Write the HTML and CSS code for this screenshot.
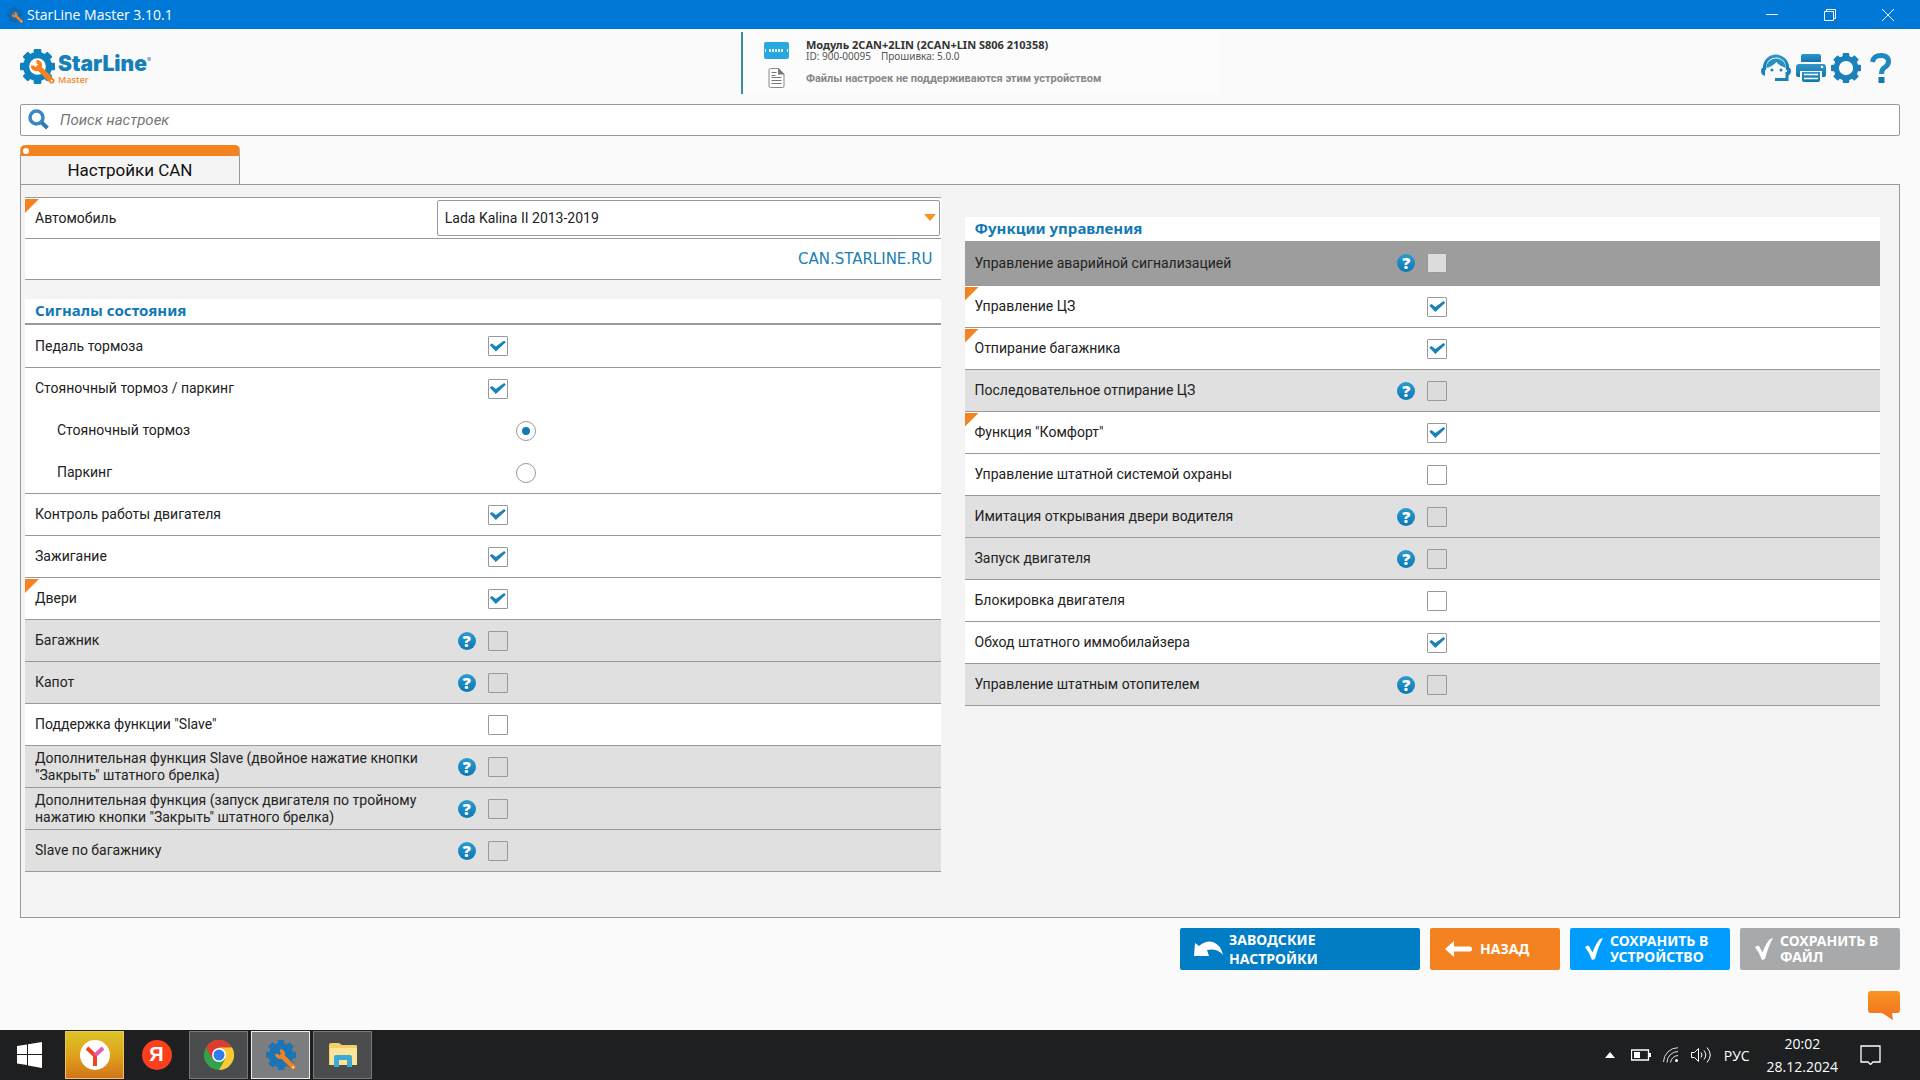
FILE: index.html
```html
<!DOCTYPE html>
<html lang="ru">
<head>
<meta charset="utf-8">
<title>StarLine Master 3.10.1</title>
<link rel="stylesheet" href="styles.css">
</head>
<body>
<svg class="defs" aria-hidden="true">
  <defs>
    <linearGradient id="blue" x1="0" y1="0" x2="0" y2="1"><stop offset="0" stop-color="#2f96c8"/><stop offset="1" stop-color="#0f76ad"/></linearGradient>
    <linearGradient id="amber" x1="0" y1="0" x2="0" y2="1"><stop offset="0" stop-color="#f79420"/><stop offset="1" stop-color="#f36f21"/></linearGradient>
  </defs>
  <symbol id="gear" viewBox="0 0 32 32">
    <circle cx="16" cy="16" r="10.400" fill="none" stroke="currentColor" stroke-width="5.600"/>
    <g fill="currentColor">
      <rect x="12.500" y="0" width="7" height="6" rx="1"/><rect x="12.500" y="26" width="7" height="6" rx="1"/>
      <rect x="0" y="12.500" width="6" height="7" rx="1"/><rect x="26" y="12.500" width="6" height="7" rx="1"/>
      <g transform="rotate(45 16 16)"><rect x="12.500" y="0" width="7" height="6" rx="1"/><rect x="12.500" y="26" width="7" height="6" rx="1"/><rect x="0" y="12.500" width="6" height="7" rx="1"/><rect x="26" y="12.500" width="6" height="7" rx="1"/></g>
    </g>
  </symbol>
  <symbol id="wrench" viewBox="0 0 32 32">
    <path d="M17 17L29 29" stroke="#f58220" stroke-width="5" stroke-linecap="round"/>
    <path d="M15 11.500A3.500 3.500 0 1 1 11.500 15" fill="none" stroke="#f58220" stroke-width="3.500"/>
    <circle cx="29" cy="29" r="1" fill="#fff"/>
  </symbol>
  <symbol id="tick" viewBox="0 0 18 22"><path d="M0 9Q3 7 4 8Q5.500 11 7.500 14.500Q11 5 15 1L18 0Q13 9 10 21L7 22Q4 14 0 9Z" fill="currentColor"/></symbol>
</svg>

<header class="titlebar">
  <svg class="app-icon"><use href="#gear" color="#1667a8"/><use href="#wrench"/></svg>
  <span class="app-title">StarLine Master 3.10.1</span>
  <button class="win-btn" aria-label="Свернуть"><svg width="12" height="12"><path d="M0 5.500H12" stroke="#fff"/></svg></button>
  <button class="win-btn" aria-label="Развернуть"><svg width="12" height="12" fill="none" stroke="#fff"><path d="M.5 2.500h9v9h-9zM2.500 2V.5h9v9H10"/></svg></button>
  <button class="win-btn" aria-label="Закрыть"><svg width="12" height="12" stroke="#fff"><path d="M0 0L12 12M12 0L0 12"/></svg></button>
</header>

<main class="app">
  <div class="toolbar">
    <div class="logo">
      <svg width="35" height="35"><circle cx="17" cy="17" r="10" fill="#fff"/><use href="#gear" color="#0f82bd"/><use href="#wrench"/></svg>
      <div class="logo-text"><span class="logo-name">StarLine</span><span class="logo-sub">Master</span></div>
    </div>
    <section class="device">
      <svg width="25" height="17" viewBox="0 0 25 17"><rect width="25" height="17" rx="2" fill="#29a8df"/><path d="M1.500 7v3M23.500 7v3" stroke="#fff"/><path d="M5 8.500h15" stroke="#fff" stroke-width="3" stroke-dasharray="2 1" opacity=".8"/></svg>
      <div><h1 class="device-name">Модуль 2CAN+2LIN (2CAN+LIN S806 210358)</h1><p class="device-info"><span>ID: 900-00095</span><span>Прошивка: 5.0.0</span></p></div>
      <svg width="16" height="20" viewBox="0 0 16 20"><path d="M2 .5H10L15.500 6V18Q15.500 19.500 14 19.500H2Q.5 19.500 .5 18V2Q.5 .5 2 .5Z" fill="#fff" stroke="#888"/><path d="M9.500 0V6.500H16Z" fill="#777"/><path d="M3 4.500h5M3 7.500h4M3 9.500h10M3 12.500h10M3 15.500h10" stroke="#777"/></svg>
      <p class="device-files">Файлы настроек не поддерживаются этим устройством</p>
    </section>
    <nav class="tools">
      <button class="tool" aria-label="Поддержка"><svg width="30" height="30" viewBox="0 0 30 30"><path d="M3.500 17V14A11.500 11 0 0 1 26.500 14V17" fill="none" stroke="url(#blue)" stroke-width="3"/><path d="M26 19V26.500H14" fill="none" stroke="#1a82b8" stroke-width="3"/><path d="M0 18Q0 14 4 14V23Q0 22 0 18ZM30 18Q30 14 26 14V23Q30 22 30 18Z" fill="#1a82b8"/><path d="M5 15Q6 6 15 5.500Q24 6 25 15Q19 14 15.500 9Q11 14 5 15Z" fill="#2a90c4"/><circle cx="11" cy="17" r="1.500" fill="#1a82b8"/><circle cx="20" cy="17" r="1.500" fill="#1a82b8"/></svg></button>
      <button class="tool" aria-label="Печать"><svg width="30" height="30" viewBox="0 0 30 30" fill="url(#blue)"><path d="M7 1H23Q25 1 25 3V9H5V3Q5 1 7 1Z"/><path d="M3 11H27Q30 11 30 14V22Q30 24 27 24H26V18H4V24H3Q0 24 0 22V14Q0 11 3 11Z"/><path d="M6 19H24V27Q24 29 22 29H8Q6 29 6 27Z"/><path d="M8 21.500H22M8 25.500H22" stroke="#fff" stroke-width="1.500"/><circle cx="26" cy="14" r="1.200" fill="#fff"/></svg></button>
      <button class="tool" aria-label="Настройки"><svg width="30" height="30"><use href="#gear" color="#1a82b8"/></svg></button>
      <button class="tool" aria-label="Справка"><svg width="30" height="30" viewBox="0 0 30 30"><path d="M6.500 9Q7.500 2.500 15 2.500Q22.500 2.500 22.500 8.500Q22.500 12 18.500 14.500Q15.500 16.500 15.500 21" fill="none" stroke="#1f88bf" stroke-width="5"/><rect x="12.500" y="24" width="6" height="6" fill="#1579b0"/></svg></button>
    </nav>
  </div>

  <label class="search">
    <svg width="22" height="22" viewBox="0 0 22 22"><circle cx="8.500" cy="8.500" r="6.500" fill="none" stroke="#3a87c8" stroke-width="3.500"/><path d="M13.500 13.500L19.500 19" stroke="#2f78b8" stroke-width="4"/></svg>
    <input class="search-input" type="text" placeholder="Поиск настроек" aria-label="Поиск настроек">
  </label>

  <div class="tabs"><button class="tab">Настройки CAN</button></div>

  <div class="panel">
    <div class="column">
      <div class="vehicle">
        <label class="label changed" for="car">Автомобиль</label>
        <div class="select-box">
          <select class="select" id="car"><option>Lada Kalina II 2013-2019</option></select>
          <svg class="caret" width="12" height="8"><path d="M0 0H12L6 7Z" fill="#f7941e"/></svg>
        </div>
      </div>
      <div class="link-row"><a class="link" href="#">CAN.STARLINE.RU</a></div>

      <h2 class="heading ruled">Сигналы состояния</h2>
      <div class="row first"><label class="label" for="s1">Педаль тормоза</label><div class="control"><input class="check" type="checkbox" id="s1" checked></div></div>
      <div class="row open"><label class="label" for="s2">Стояночный тормоз / паркинг</label><div class="control"><input class="check" type="checkbox" id="s2" checked></div></div>
      <div class="row open"><label class="label sub" for="r1">Стояночный тормоз</label><div class="control"><input class="radio" type="radio" name="brake" id="r1" checked></div></div>
      <div class="row"><label class="label sub" for="r2">Паркинг</label><div class="control"><input class="radio" type="radio" name="brake" id="r2"></div></div>
      <div class="row"><label class="label" for="s3">Контроль работы двигателя</label><div class="control"><input class="check" type="checkbox" id="s3" checked></div></div>
      <div class="row"><label class="label" for="s4">Зажигание</label><div class="control"><input class="check" type="checkbox" id="s4" checked></div></div>
      <div class="row"><label class="label changed" for="s5">Двери</label><div class="control"><input class="check" type="checkbox" id="s5" checked></div></div>
      <div class="row off"><label class="label" for="s6">Багажник</label><div class="control"><button class="help">?</button><input class="check" type="checkbox" id="s6" disabled></div></div>
      <div class="row off"><label class="label" for="s7">Капот</label><div class="control"><button class="help">?</button><input class="check" type="checkbox" id="s7" disabled></div></div>
      <div class="row"><label class="label" for="s8">Поддержка функции "Slave"</label><div class="control"><input class="check" type="checkbox" id="s8"></div></div>
      <div class="row off"><label class="label" for="s9">Дополнительная функция Slave (двойное нажатие кнопки "Закрыть" штатного брелка)</label><div class="control"><button class="help">?</button><input class="check" type="checkbox" id="s9" disabled></div></div>
      <div class="row off"><label class="label" for="s10">Дополнительная функция (запуск двигателя по тройному нажатию кнопки "Закрыть" штатного брелка)</label><div class="control"><button class="help">?</button><input class="check" type="checkbox" id="s10" disabled></div></div>
      <div class="row off"><label class="label" for="s11">Slave по багажнику</label><div class="control"><button class="help">?</button><input class="check" type="checkbox" id="s11" disabled></div></div>
    </div>

    <div class="column second">
      <h2 class="heading">Функции управления</h2>
      <div class="row off current"><label class="label" for="c1">Управление аварийной сигнализацией</label><div class="control"><button class="help">?</button><input class="check" type="checkbox" id="c1" disabled></div></div>
      <div class="row"><label class="label changed" for="c2">Управление ЦЗ</label><div class="control"><input class="check" type="checkbox" id="c2" checked></div></div>
      <div class="row"><label class="label changed" for="c3">Отпирание багажника</label><div class="control"><input class="check" type="checkbox" id="c3" checked></div></div>
      <div class="row off"><label class="label" for="c4">Последовательное отпирание ЦЗ</label><div class="control"><button class="help">?</button><input class="check" type="checkbox" id="c4" disabled></div></div>
      <div class="row"><label class="label changed" for="c5">Функция "Комфорт"</label><div class="control"><input class="check" type="checkbox" id="c5" checked></div></div>
      <div class="row"><label class="label" for="c6">Управление штатной системой охраны</label><div class="control"><input class="check" type="checkbox" id="c6"></div></div>
      <div class="row off"><label class="label" for="c7">Имитация открывания двери водителя</label><div class="control"><button class="help">?</button><input class="check" type="checkbox" id="c7" disabled></div></div>
      <div class="row off"><label class="label" for="c8">Запуск двигателя</label><div class="control"><button class="help">?</button><input class="check" type="checkbox" id="c8" disabled></div></div>
      <div class="row"><label class="label" for="c9">Блокировка двигателя</label><div class="control"><input class="check" type="checkbox" id="c9"></div></div>
      <div class="row"><label class="label" for="c10">Обход штатного иммобилайзера</label><div class="control"><input class="check" type="checkbox" id="c10" checked></div></div>
      <div class="row off"><label class="label" for="c11">Управление штатным отопителем</label><div class="control"><button class="help">?</button><input class="check" type="checkbox" id="c11" disabled></div></div>
    </div>
  </div>

  <div class="actions">
    <button class="action factory"><svg width="30" height="18" viewBox="0 0 30 18"><path d="M1 3L5 6Q12 0 19 2Q27 5 29 15Q23 8 13 10L15 16L0 16Z" fill="#fff"/></svg><span>ЗАВОДСКИЕ<br>НАСТРОЙКИ</span></button>
    <button class="action back"><svg width="28" height="16" viewBox="0 0 28 16"><path d="M0 8L9 0V5.500H25Q27 5.500 27 8Q27 10.500 25 10.500H9V16Z" fill="#fff"/></svg><span>НАЗАД</span></button>
    <button class="action device-save"><svg width="18" height="22"><use href="#tick"/></svg><span>СОХРАНИТЬ В<br>УСТРОЙСТВО</span></button>
    <button class="action file-save" disabled><svg width="18" height="22"><use href="#tick"/></svg><span>СОХРАНИТЬ В<br>ФАЙЛ</span></button>
  </div>
  <button class="chat" aria-label="Сообщение"><svg width="32" height="30" viewBox="0 0 32 30"><path d="M3 0H29Q32 0 32 3V19Q32 22 29 22H24L25 29L14 22H3Q0 22 0 19V3Q0 0 3 0Z" fill="url(#amber)"/></svg></button>
</main>

<footer class="taskbar">
  <button class="task start" aria-label="Пуск"><svg width="25" height="26" viewBox="0 0 25 26" fill="#fff"><path d="M0 4L10 2.500V12H0ZM11 2.300L25 0V12H11ZM0 13H10V23L0 21.500ZM11 13H25V26L11 23.500Z"/></svg></button>
  <button class="task yandex" aria-label="Яндекс Браузер"><svg width="30" height="30" viewBox="0 0 30 30"><circle cx="15" cy="15" r="15" fill="#fff"/><path d="M7 8L15 15.500V26" fill="none" stroke="#ee4423" stroke-width="4"/><path d="M15 15.500L23 8" stroke="#e45bb0" stroke-width="4"/></svg></button>
  <button class="task" aria-label="Яндекс"><span class="ya">Я</span></button>
  <button class="task open" aria-label="Chrome"><svg width="30" height="30" viewBox="0 0 30 30"><circle cx="15" cy="15" r="15" fill="#34a24b"/><path d="M2 7.500A15 15 0 0 1 28 7.500L15 8L8.500 19Z" fill="#df3b2f"/><path d="M28 7.500A15 15 0 0 1 15 30L21.500 18.500L15 7.500Z" fill="#fcc934"/><circle cx="15" cy="15" r="7" fill="#fff"/><circle cx="15" cy="15" r="5.500" fill="#2f7de8"/></svg></button>
  <button class="task open active" aria-label="StarLine Master"><svg width="30" height="30"><use href="#gear" color="#1b75b5"/><circle cx="15" cy="15" r="8" fill="#1b75b5"/><use href="#wrench"/></svg></button>
  <button class="task open" aria-label="Проводник"><svg width="28" height="24" viewBox="0 0 28 24"><path d="M0 2Q0 0 2 0H10L13 2H27Q28 2 28 3V22H0Z" fill="#f3cf68"/><path d="M1 5H28V22H1Z" fill="#fbe59a"/><path d="M5 24V14Q5 12 7 12H21Q23 12 23 14V24H18V17H10V24Z" fill="#3fa9d6"/></svg></button>
  <div class="tray">
    <svg width="10" height="6"><path d="M0 6L5 0L10 6Z" fill="#fff"/></svg>
    <svg width="20" height="12" viewBox="0 0 20 12"><path d="M.5 1H17.500V11H.5Z" fill="none" stroke="#fff" stroke-width="1.300"/><path d="M3 3H9V9H3ZM18 4h2v4h-2Z" fill="#fff"/></svg>
    <svg width="16" height="16" viewBox="0 0 16 16" fill="none" stroke="#ddd"><path d="M.5 15A14.500 14.500 0 0 1 15 .7M4 15.500A11 11 0 0 1 15 4.500M7.500 15.500A8 8 0 0 1 15 8.500"/><circle cx="13.500" cy="13.500" r="1.500" fill="#fff" stroke="none"/></svg>
    <svg width="21" height="18" viewBox="0 0 21 18" fill="none" stroke="#fff"><path d="M.5 6.500H3.500L7.500 2.500V15.500L3.500 11.500H.5ZM10 6.500Q12 9 10 11.500M13 4.500Q16.500 9 13 13.500M16 1.500Q22.500 9 16 16.500"/></svg>
    <span class="lang">РУС</span>
    <time class="clock"><span>20:02</span><span>28.12.2024</span></time>
    <svg class="notices" width="21" height="20" viewBox="0 0 21 20"><path d="M1 1H20V17H13L10.500 19.500L8 17H1Z" fill="none" stroke="#fff" stroke-width="1.300"/></svg>
  </div>
</footer>
</body>
</html>
```
FILE: styles.css
```css
* { box-sizing: border-box; }

body {
  margin: 0;
  min-height: 100vh;
  display: flex;
  flex-direction: column;
  background: #fafafa;
  color: #222;
  font: 14px/17px Roboto, "Noto Sans", sans-serif;
}

button, input, select { font: inherit; color: inherit; }
button { border: 0; padding: 0; background: none; }
h1, h2, p { margin: 0; }
svg { flex: none; display: block; }
.defs { position: absolute; width: 0; height: 0; }

/* Window title bar */
.titlebar {
  display: flex;
  align-items: center;
  height: 29px;
  padding-left: 7px;
  background: #0078d7;
  color: #fff;
}
.app-icon { width: 16px; height: 16px; }
.app-title { flex: 1; padding-left: 4px; font: 14px/20px "Open Sans", sans-serif; }
.win-btn { width: 58px; height: 29px; display: grid; place-items: center; }
.win-btn:last-child { margin-right: 3px; }

.app { flex: 1; display: flex; flex-direction: column; padding: 0 20px; }

/* Logo, connected device, tools */
.toolbar {
  display: grid;
  grid-template-columns: 721px 478px 1fr;
  height: 75px;
  padding-top: 3px;
}
.logo { display: flex; gap: 3px; padding-top: 17px; }
.logo-text { display: flex; flex-direction: column; padding-top: 4px; }
.logo-name { font: 900 21px/22px Inter, sans-serif; color: #1580b8; }
.logo-name::after { content: "®"; font-size: 6px; font-weight: 400; vertical-align: 9px; line-height: 6px; }
.logo-sub { font: 600 9px/10px "Open Sans", sans-serif; color: #f08a35; }

.device {
  display: grid;
  grid-template-columns: 42px 1fr;
  grid-template-rows: 32px 24px;
  align-content: start;
  align-items: center;
  height: 62px;
  padding: 2px 0 0 21px;
  border-left: 2px solid #3a8f9f;
  background: #fcfcfc;
}
.device > svg { width: 25px; }
.device-name { font: bold 11px/12px "Noto Sans", sans-serif; color: #333; }
.device-info { display: flex; gap: 10px; font: 10px/11px "Noto Sans", sans-serif; color: #555; }
.device-files { font-weight: bold; font-size: 11px; color: #888; }

.tools { display: flex; justify-content: flex-end; gap: 5px; padding: 21px 4px 0 0; }
.tool { height: 30px; }

/* Search */
.search {
  display: flex;
  align-items: center;
  gap: 8px;
  height: 32px;
  padding-left: 7px;
  border: 1px solid #999;
  border-radius: 2px;
  background: #fff;
}
.search-input { flex: 1; border: 0; outline: 0; background: none; font-style: italic; font-size: 15px; }
.search-input::placeholder { color: #777; }

/* Tabs */
.tabs { display: flex; margin-top: 9px; }
.tab {
  position: relative;
  width: 220px;
  height: 39px;
  border: 1px solid #999;
  border-top: 11px solid #f58220;
  border-bottom: 0;
  border-radius: 5px 5px 0 0;
  background: #f4f4f4;
  color: #111;
  font-size: 17px;
}
.tab::before {
  content: "";
  position: absolute;
  top: -8px;
  left: 2px;
  width: 6px;
  height: 6px;
  border-radius: 50%;
  background: #fff;
}

/* Settings */
.panel {
  display: grid;
  grid-template-columns: 1fr 1fr;
  gap: 24px;
  flex: 1;
  padding: 12px 19px 44px 4px;
  border: 1px solid #999;
  background: #f4f4f4;
}
.second { padding-top: 20px; }

.vehicle, .row {
  position: relative;
  display: grid;
  grid-template-columns: 433fr 483fr;
  align-items: center;
  min-height: 42px;
  border-bottom: 1px solid #999;
  background: #fff;
}
.vehicle { grid-template-columns: 412fr 504fr; border-top: 1px solid #999; }
.label { padding: 0 20px 0 10px; }
.sub { padding-left: 32px; }
.changed::before {
  content: "";
  position: absolute;
  top: 1px;
  left: 0;
  width: 14px;
  height: 14px;
  background: #f58220;
  clip-path: polygon(0 0, 100% 0, 0 100%);
}
.select-box {
  display: flex;
  align-items: center;
  height: 36px;
  margin-right: 1px;
  padding-right: 3px;
  border: 1px solid #999;
  border-radius: 2px;
}
.select { flex: 1; height: 34px; padding: 0 7px; border: 0; outline: 0; appearance: none; background: none; }
.link-row {
  display: flex;
  align-items: center;
  justify-content: flex-end;
  height: 41px;
  padding-right: 8px;
  border-bottom: 1px solid #999;
  background: #fff;
}
.link { font-family: "DejaVu Sans", sans-serif; font-size: 15px; color: #1a7fb5; text-decoration: none; }

.heading { height: 24px; padding-left: 10px; background: #fff; color: #1279b5; font: bold 15px/22px "Noto Sans", sans-serif; }
.ruled { height: 26px; margin-top: 19px; border-bottom: 2px solid #999; }

.first { min-height: 43px; }
.open { border-bottom-color: #fff; }
.off { background: #e0e0e0; }
.current { min-height: 45px; background: #9d9d9d; }

.control { display: flex; align-items: center; gap: 12px; }
.check, .radio {
  display: grid;
  place-items: center;
  width: 20px;
  height: 20px;
  margin: 0;
  border: 1px solid #999;
  border-radius: 1px;
  background: #fff;
  appearance: none;
}
.check:first-child { margin-left: 30px; }
.check:disabled { background: #dcdcdc; }
.check:checked::before {
  content: "";
  width: 16px;
  height: 11px;
  background: #1a82bb;
  clip-path: polygon(0 40%, 14% 28%, 38% 54%, 90% 0, 100% 16%, 38% 100%);
}
.radio { margin-left: 58px; border-radius: 50%; }
.radio:checked::before { content: ""; width: 8px; height: 8px; border-radius: 50%; background: #147ab0; }
.help {
  width: 18px;
  height: 18px;
  border-radius: 50%;
  background: linear-gradient(#2d9bd0, #0a78b4);
  color: #fff;
  font: 800 16px/18px "Open Sans", sans-serif;
}

/* Bottom buttons */
.actions { display: flex; justify-content: flex-end; gap: 10px; margin-top: 10px; }
.action {
  display: flex;
  align-items: center;
  gap: 7px;
  width: 160px;
  height: 42px;
  padding-left: 15px;
  border-radius: 2px;
  color: #fff;
  font: bold 14px/16px "Noto Sans", sans-serif;
  text-align: left;
}
.factory { gap: 5px; width: 240px; padding-left: 14px; background: #007dc5; line-height: 19px; }
.back { width: 130px; background: #f58220; }
.device-save { background: #009dff; }
.file-save { background: #a8a9ab; }
.chat { align-self: flex-end; margin: 21px 0 9px; }

/* Taskbar */
.taskbar { display: flex; align-items: center; gap: 3px; height: 50px; background: #1d1f21; }
.task { display: grid; place-items: center; width: 59px; height: 48px; border: 1px solid transparent; }
.start { margin-right: 3px; }
.yandex { border-color: #e8c860; background: linear-gradient(#dcc326, #e0a31c 50%, #d27419); }
.task.open { border-color: #777; background: #4b4c4d; }
.task.active { border-color: #eee; background: #7c7d7e; }
.ya { width: 30px; height: 30px; border-radius: 50%; background: #fc3f1d; color: #fff; font: bold 20px/29px "Liberation Sans", sans-serif; }
.tray { display: flex; align-items: center; gap: 12px; margin-left: auto; padding-right: 39px; color: #fff; font: 14px/23px "Open Sans", sans-serif; }
.tray svg:first-child { margin-right: 4px; }
.clock { display: flex; flex-direction: column; align-items: center; padding-left: 5px; }
.notices { margin-left: 10px; }
```
